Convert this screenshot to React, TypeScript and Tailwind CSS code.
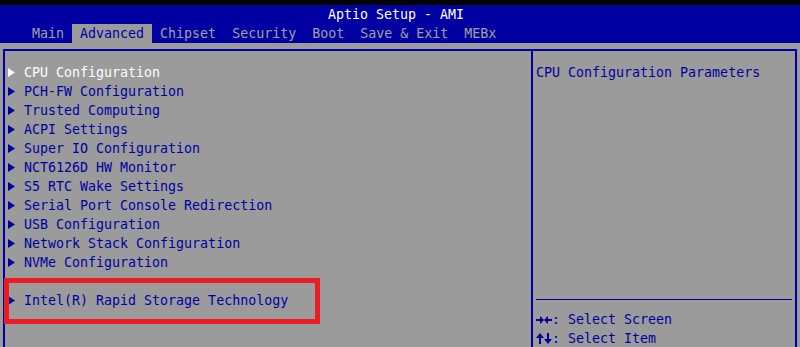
const tabs = ["Main", "Advanced", "Chipset", "Security", "Boot", "Save & Exit", "MEBx"];

const items = [
  "CPU Configuration",
  "PCH-FW Configuration",
  "Trusted Computing",
  "ACPI Settings",
  "Super IO Configuration",
  "NCT6126D HW Monitor",
  "S5 RTC Wake Settings",
  "Serial Port Console Redirection",
  "USB Configuration",
  "Network Stack Configuration",
  "NVMe Configuration",
];

function Arrow({ white }: { white?: boolean }) {
  return (
    <svg width="16" height="19" viewBox="0 0 16 19" className="shrink-0">
      <path d="M0 5 L7 9.5 L0 14 Z" fill={white ? "#ffffff" : "#0000a2"} />
    </svg>
  );
}

// left/right arrows, drawn like the BIOS glyph
function LeftRight() {
  return (
    <svg width="16" height="19" viewBox="0 0 16 19" className="inline-block align-top">
      <g fill="#0000a2">
        <rect x="0" y="9" width="5" height="2" />
        <path d="M4 6 L8 10 L4 14 Z" />
        <rect x="11" y="9" width="5" height="2" />
        <path d="M12 6 L8 10 L12 14 Z" />
      </g>
    </svg>
  );
}

function UpDown() {
  return (
    <svg width="16" height="19" viewBox="0 0 16 19" className="inline-block align-top">
      <g fill="#0000a2">
        <rect x="3" y="8" width="2" height="7" />
        <path d="M0 9 L4 4 L8 9 Z" />
        <rect x="11" y="4" width="2" height="7" />
        <path d="M8 10 L12 15 L16 10 Z" />
      </g>
    </svg>
  );
}

function Row({ label, selected }: { label: string; selected?: boolean }) {
  return (
    <div className="flex h-[19px] items-center pl-[3px]">
      <Arrow white={selected} />
      <span className={selected ? "text-white" : "text-[#0000a2]"}>{label}</span>
    </div>
  );
}

export default function App() {
  return (
    <div
      className="relative h-[347px] w-[800px] overflow-hidden bg-[#9b9b9b] text-[13.3px] leading-[19px] whitespace-pre"
      style={{ fontFamily: '"DejaVu Sans Mono", "Liberation Mono", monospace' }}
    >
      <div className="h-[5px] bg-black" />
      <header className="h-[38px] bg-[#0000a2]">
        <div className="h-[19px] pl-[328px] text-white">Aptio Setup - AMI</div>
        <nav className="flex pl-[24px]">
          {tabs.map((t) => (
            <span
              key={t}
              className={
                t === "Advanced"
                  ? "bg-[#9b9b9b] px-2 text-[#0000a2]"
                  : "px-2 text-[#a0a0a0]"
              }
            >
              {t}
            </span>
          ))}
        </nav>
      </header>

      <div className="ml-[3px] mt-[6px] flex h-[300px] w-[794px] border-x-2 border-t-2 border-[#0000a2]">
        <section className="w-[526px] pt-[12px]">
          {items.map((it, i) => (
            <Row key={it} label={it} selected={i === 0} />
          ))}
          <div className="h-[19px]" />
          <Row label="Intel(R) Rapid Storage Technology" />
        </section>
        <aside className="flex flex-1 flex-col border-l-2 border-[#0000a2] pl-[3px] pr-[3px] text-[#0000a2]">
          <div className="pt-[12px]">CPU Configuration Parameters</div>
          <div className="mt-[217px] h-px bg-[#0000a2]" />
          <div className="pt-[10px]">
            <div className="flex h-[19px]">
              <LeftRight />
              <span>: Select Screen</span>
            </div>
            <div className="flex h-[19px]">
              <UpDown />
              <span>: Select Item</span>
            </div>
          </div>
        </aside>
      </div>

      <div className="absolute left-[4px] top-[278px] h-[46px] w-[316px] border-[5px] border-[#ec1c24]" />
    </div>
  );
}
